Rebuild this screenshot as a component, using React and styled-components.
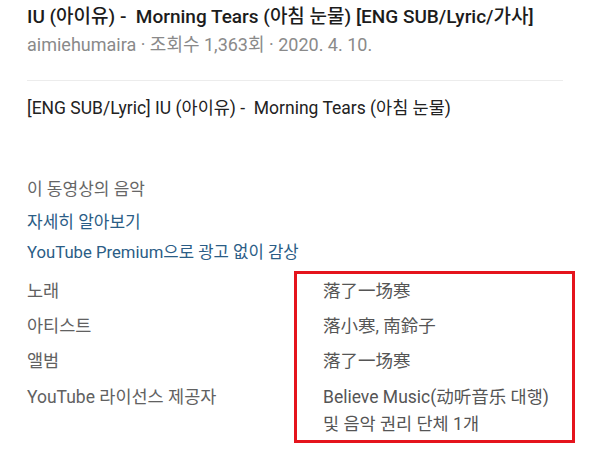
import styled, { createGlobalStyle } from "styled-components";

const Global = createGlobalStyle`
  body {
    margin: 0;
    background: #fff;
    font-family: Roboto, "Noto Sans CJK KR", "Noto Sans CJK SC", sans-serif;
  }
`;

const Page = styled.div`
  width: 600px;
  height: 453px;
  padding: 5px 25px 0 27px;
  box-sizing: border-box;
  overflow: hidden;
`;

const Title = styled.h1`
  margin: 0;
  font-size: 19px;
  line-height: 24px;
  font-weight: 500;
  color: #1c1c1c;
  white-space: nowrap;
`;

const Meta = styled.div`
  margin-top: 6px;
  font-size: 18px;
  line-height: 20px;
  color: #8a8a8a;
`;

const Divider = styled.hr`
  margin: 25px 12px 0 0;
  border: 0;
  border-top: 1px solid #ececec;
`;

const Desc = styled.p`
  margin: 15px 0 0;
  font-size: 17.5px;
  line-height: 24px;
  color: #222;
`;

const Heading = styled.div`
  margin-top: 58px;
  font-size: 17px;
  line-height: 22px;
  color: #666;
`;

const Link = styled.div`
  margin-top: ${(p) => p.$gap || 10}px;
  font-size: ${(p) => p.$size || 17}px;
  line-height: 22px;
  color: #2b5d86;
`;

const Details = styled.div`
  display: flex;
  align-items: flex-start;
  margin-top: 7px;
`;

const Labels = styled.div`
  width: 267px;
  padding-top: 8px;
  display: flex;
  flex-direction: column;
  gap: 11px;
`;

const Box = styled.div`
  flex: 1;
  border: 3px solid #e5141d;
  padding: 5px 8px 2px 26px;
  display: flex;
  flex-direction: column;
  gap: 11px;
`;

const Cell = styled.div`
  font-size: 17.5px;
  line-height: ${(p) => (p.$tall ? 27 : 24)}px;
  color: ${(p) => (p.$value ? "#555" : "#616161")};
  white-space: nowrap;
`;

const rows = [
  ["노래", "落了一场寒"],
  ["아티스트", "落小寒, 南鈴子"],
  ["앨범", "落了一场寒"],
  ["YouTube 라이선스 제공자", "Believe Music(动听音乐 대행)\n및 음악 권리 단체 1개"],
];

export default function App() {
  return (
    <Page>
      <Global />
      <Title>IU (아이유) -&nbsp; Morning Tears (아침 눈물) [ENG SUB/Lyric/가사]</Title>
      <Meta>aimiehumaira · 조회수 1,363회 · 2020. 4. 10.</Meta>
      <Divider />
      <Desc>[ENG SUB/Lyric] IU (아이유) -&nbsp; Morning Tears (아침 눈물)</Desc>
      <Heading>이 동영상의 음악</Heading>
      <Link $gap={11}>자세히 알아보기</Link>
      <Link $gap={9} $size={16.7}>YouTube Premium으로 광고 없이 감상</Link>
      <Details>
        <Labels>
          {rows.map(([label, value]) => (
            <Cell key={label} $tall={value.includes("\n")}>
              {label}
            </Cell>
          ))}
        </Labels>
        <Box>
          {rows.map(([label, value]) => {
            const lines = value.split("\n");
            return (
              <Cell key={label} $value $tall={lines.length > 1}>
                {lines.map((l) => (
                  <div key={l}>{l}</div>
                ))}
              </Cell>
            );
          })}
        </Box>
      </Details>
    </Page>
  );
}
